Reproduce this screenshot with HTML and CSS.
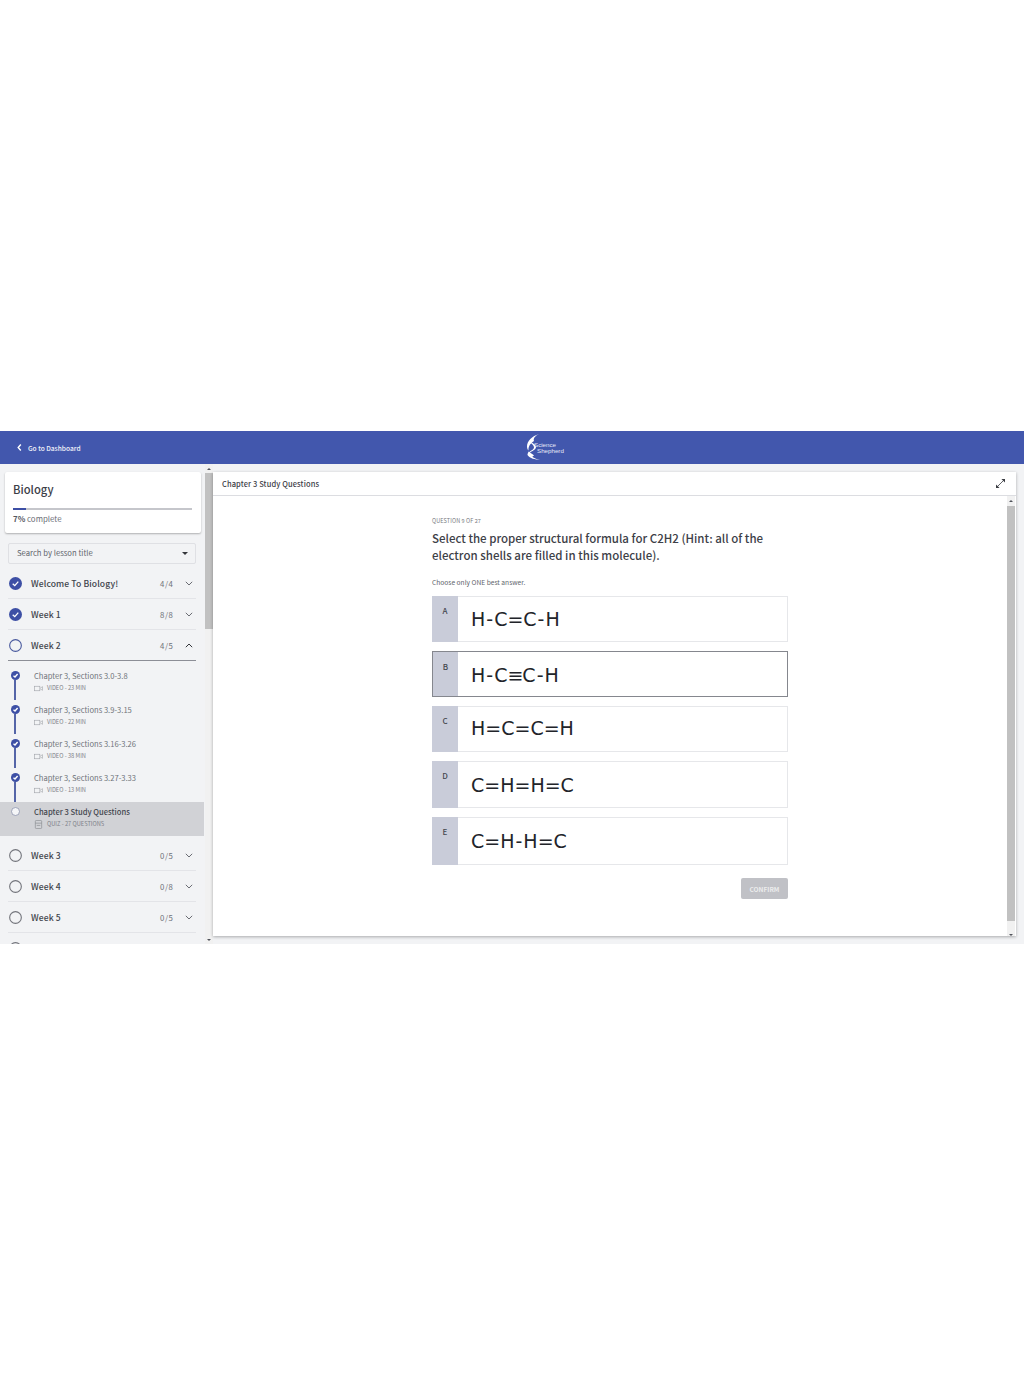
FILE: index.html
```html
<!DOCTYPE html>
<html lang="en">
<head>
<meta charset="utf-8">
<title>Science Shepherd - Biology</title>
<link rel="stylesheet" href="styles.css">
</head>
<body>
<div class="blank-top"></div>
<div class="app">
  <header class="topbar">
    <a class="back">
      <svg class="back-icon" viewBox="0 0 8 10"><path d="M5.5 1.5 2.5 5l3 3.5"/></svg>
      <span>Go to Dashboard</span>
    </a>
    <div class="logo">
      <svg class="logo-mark" viewBox="0 0 17 26">
        <path class="logo-fill" d="M13 0C6 2 1 7 1 12.500c0 1.500.5 3 1.500 4C2 12 5 9 8 7 7 4.500 9 2 13 0z"/>
        <path class="logo-fill" d="M3 7.500c3 1 7 3 7 5.500 0 3-5 4-7 6.500 2 3 6 5.500 11 6.500-5-.5-10-1.500-12.500-5C1 17.500 8 16.500 8 13.500 8 11 5 9 3 7.500z"/>
        <path class="logo-fill" d="M2 17.500c2 1.500 5 2.500 6 4-1 .5-1.500 1-2 1.800C4 22 2.500 20 2 17.500z"/>
      </svg>
      <div class="logo-text"><span>Science</span><span class="logo-second">Shepherd</span></div>
    </div>
  </header>
  <div class="workspace">
    <aside class="sidebar">
      <div class="sidebar-scroll">
        <section class="course-card">
          <h1>Biology</h1>
          <div class="progress"><div class="progress-fill"></div></div>
          <p class="progress-text"><b>7%</b> complete</p>
        </section>
        <div class="search"><span>Search by lesson title</span><i class="caret"></i></div>

        <div class="week">
          <svg class="status" viewBox="0 0 14 14"><circle class="done" cx="7" cy="7" r="7"/><path class="tick" d="M4 7.300 6.200 9.300 10 5"/></svg>
          <span class="week-name">Welcome To Biology!</span><span class="count">4/4</span>
          <svg class="chev" viewBox="0 0 8 5"><path d="M.8.8 4 4 7.200.8"/></svg>
        </div>
        <div class="week">
          <svg class="status" viewBox="0 0 14 14"><circle class="done" cx="7" cy="7" r="7"/><path class="tick" d="M4 7.300 6.200 9.300 10 5"/></svg>
          <span class="week-name">Week 1</span><span class="count">8/8</span>
          <svg class="chev" viewBox="0 0 8 5"><path d="M.8.8 4 4 7.200.8"/></svg>
        </div>
        <div class="week week-open">
          <svg class="status" viewBox="0 0 14 14"><circle class="open-blue" cx="7" cy="7" r="6.300"/></svg>
          <span class="week-name">Week 2</span><span class="count">4/5</span>
          <svg class="chev chev-up" viewBox="0 0 8 5"><path d="M.8 4.200 4 1l3.200 3.200"/></svg>
        </div>

        <ul class="lessons">
          <li class="lesson">
            <div class="rail"><svg class="dot" viewBox="0 0 9 9"><circle class="done" cx="4.500" cy="4.500" r="4.500"/><path class="tick" d="M2.500 4.700 4 6l2.600-3"/></svg><span class="rail-line"></span></div>
            <div><div class="lesson-title">Chapter 3, Sections 3.0-3.8</div>
            <div class="lesson-meta"><svg class="meta-icon" viewBox="0 0 10 7"><rect x=".5" y="1" width="6" height="5"/><path d="M7 3 9.500 1.500v4L7 4"/></svg>VIDEO - 23 MIN</div></div>
          </li>
          <li class="lesson">
            <div class="rail"><svg class="dot" viewBox="0 0 9 9"><circle class="done" cx="4.500" cy="4.500" r="4.500"/><path class="tick" d="M2.500 4.700 4 6l2.600-3"/></svg><span class="rail-line"></span></div>
            <div><div class="lesson-title">Chapter 3, Sections 3.9-3.15</div>
            <div class="lesson-meta"><svg class="meta-icon" viewBox="0 0 10 7"><rect x=".5" y="1" width="6" height="5"/><path d="M7 3 9.500 1.500v4L7 4"/></svg>VIDEO - 22 MIN</div></div>
          </li>
          <li class="lesson">
            <div class="rail"><svg class="dot" viewBox="0 0 9 9"><circle class="done" cx="4.500" cy="4.500" r="4.500"/><path class="tick" d="M2.500 4.700 4 6l2.600-3"/></svg><span class="rail-line"></span></div>
            <div><div class="lesson-title">Chapter 3, Sections 3.16-3.26</div>
            <div class="lesson-meta"><svg class="meta-icon" viewBox="0 0 10 7"><rect x=".5" y="1" width="6" height="5"/><path d="M7 3 9.500 1.500v4L7 4"/></svg>VIDEO - 38 MIN</div></div>
          </li>
          <li class="lesson">
            <div class="rail"><svg class="dot" viewBox="0 0 9 9"><circle class="done" cx="4.500" cy="4.500" r="4.500"/><path class="tick" d="M2.500 4.700 4 6l2.600-3"/></svg><span class="rail-line"></span></div>
            <div><div class="lesson-title">Chapter 3, Sections 3.27-3.33</div>
            <div class="lesson-meta"><svg class="meta-icon" viewBox="0 0 10 7"><rect x=".5" y="1" width="6" height="5"/><path d="M7 3 9.500 1.500v4L7 4"/></svg>VIDEO - 13 MIN</div></div>
          </li>
          <li class="lesson lesson-active">
            <div class="rail"><svg class="dot" viewBox="0 0 9 9"><circle class="dot-open" cx="4.500" cy="4.500" r="4"/></svg></div>
            <div><div class="lesson-title">Chapter 3 Study Questions</div>
            <div class="lesson-meta"><svg class="meta-icon meta-quiz" viewBox="0 0 8 10"><rect x=".5" y=".5" width="7" height="9" rx="1"/><path d="M.5 3.500h7M2 6h4"/></svg>QUIZ - 27 QUESTIONS</div></div>
          </li>
        </ul>

        <div class="week">
          <svg class="status" viewBox="0 0 14 14"><circle class="open-grey" cx="7" cy="7" r="6.300"/></svg>
          <span class="week-name">Week 3</span><span class="count">0/5</span>
          <svg class="chev" viewBox="0 0 8 5"><path d="M.8.8 4 4 7.200.8"/></svg>
        </div>
        <div class="week">
          <svg class="status" viewBox="0 0 14 14"><circle class="open-grey" cx="7" cy="7" r="6.300"/></svg>
          <span class="week-name">Week 4</span><span class="count">0/8</span>
          <svg class="chev" viewBox="0 0 8 5"><path d="M.8.8 4 4 7.200.8"/></svg>
        </div>
        <div class="week">
          <svg class="status" viewBox="0 0 14 14"><circle class="open-grey" cx="7" cy="7" r="6.300"/></svg>
          <span class="week-name">Week 5</span><span class="count">0/5</span>
          <svg class="chev" viewBox="0 0 8 5"><path d="M.8.8 4 4 7.200.8"/></svg>
        </div>
        <div class="week">
          <svg class="status" viewBox="0 0 14 14"><circle class="open-grey" cx="7" cy="7" r="6.300"/></svg>
        </div>
      </div>
      <div class="scrollbar side-scrollbar">
        <i class="arrow-up"></i>
        <div class="thumb side-thumb"></div>
        <i class="arrow-down"></i>
      </div>
    </aside>

    <main class="panel">
      <div class="panel-head">
        <span class="panel-title">Chapter 3 Study Questions</span>
        <svg class="expand" viewBox="0 0 10 10"><path class="expand-line" d="M1.500 8.500 8.500 1.500"/><path class="expand-head" d="M6 0H10V4ZM0 6V10H4Z"/></svg>
      </div>
      <div class="panel-body">
        <div class="quiz">
          <div class="q-number">QUESTION 9 OF 27</div>
          <h2 class="q-text">Select the proper structural formula for C2H2 (Hint: all of the electron shells are filled in this molecule).</h2>
          <p class="q-hint">Choose only ONE best answer.</p>
          <div class="options">
            <div class="option"><span class="letter">A</span><span class="answer">H<span class="hy">-</span>C=C<span class="hy">-</span>H</span></div>
            <div class="option option-b"><span class="letter">B</span><span class="answer">H<span class="hy">-</span>C<span class="triple">≡</span>C<span class="hy">-</span>H</span></div>
            <div class="option option-c"><span class="letter">C</span><span class="answer">H=C=C=H</span></div>
            <div class="option option-d"><span class="letter">D</span><span class="answer">C=H=H=C</span></div>
            <div class="option option-e"><span class="letter">E</span><span class="answer">C=H<span class="hy">-</span>H=C</span></div>
          </div>
          <div class="actions"><button class="confirm" type="button">CONFIRM</button></div>
        </div>
        <div class="scrollbar main-scrollbar">
          <i class="arrow-up"></i>
          <div class="thumb main-thumb"></div>
          <i class="arrow-down"></i>
        </div>
      </div>
    </main>
  </div>
</div>
</body>
</html>
```

FILE: styles.css
```css
* { box-sizing: border-box; }
html, body { margin: 0; padding: 0; background: #fff; }
body {
  width: 1024px;
  height: 1376px;
  overflow: hidden;
  font-family: "Noto Sans CJK SC", "Noto Sans", sans-serif;
  color: #3a3d45;
}
.blank-top { height: 431px; }
.app { height: 513px; display: flex; flex-direction: column; background: #f2f3f5; overflow: hidden; }

.topbar {
  height: 33px;
  flex: none;
  background: #4257ad;
  display: flex;
  align-items: center;
  position: relative;
  color: #fff;
}
.back { display: flex; align-items: center; padding-left: 16px; font-size: 6.6px; font-weight: 500; color: #f3f4fb; }
.back-icon { width: 7px; height: 9px; margin-right: 5px; fill: none; stroke: #fff; stroke-width: 1.6; }
.logo { position: absolute; left: 526px; top: 3px; display: flex; align-items: center; }
.logo-mark { width: 17px; height: 26px; }
.logo-fill { fill: #fff; }
.logo-text { display: flex; flex-direction: column; font-family: "Liberation Sans", sans-serif; font-size: 6.2px; line-height: 6px; color: #e6e9f7; margin-left: -9px; margin-top: 2px; }
.logo-second { padding-left: 3px; }

.workspace { flex: 1; min-height: 0; display: flex; }

.sidebar { width: 213px; flex: none; display: flex; height: 480px; overflow: hidden; }
.sidebar-scroll { width: 205px; flex: none; overflow: hidden; padding-top: 8px; }
.course-card {
  margin-left: 5px;
  width: 196px;
  height: 61px;
  background: #fff;
  border-radius: 2px;
  box-shadow: 0 1px 2px rgba(0,0,0,.28);
  padding: 8px 9px 0 8px;
}
.course-card h1 { margin: 0; font-size: 11.2px; line-height: 19px; font-weight: 500; color: #3b3e47; }
.progress { height: 2px; background: #c5c6cb; margin-top: 9px; }
.progress-fill { width: 7%; height: 100%; background: #3d4fa5; }
.progress-text { margin: 2px 0 0; font-size: 7.9px; line-height: 13px; color: #6b6e76; }
.progress-text b { font-weight: 700; color: #55585f; }

.search {
  margin: 10px 9px 0 8px;
  height: 21px;
  border: 1px solid #dfe0e4;
  border-radius: 2px;
  background: #f2f3f5;
  display: flex;
  align-items: center;
  justify-content: space-between;
  padding: 0 7px 3px 8px;
  font-size: 7.7px;
  color: #61646c;
}
.caret { width: 0; height: 0; margin-top: 3px; border-left: 3px solid transparent; border-right: 3px solid transparent; border-top: 3px solid #33353a; }

.week {
  height: 31px;
  margin: 0 9px 0 8px;
  display: flex;
  align-items: center;
  border-bottom: 1px solid #e3e4e8;
}
.sidebar-scroll .search + .week { margin-top: 4px; }
.week-open { border-bottom-color: #8c8e96; }
.status { width: 13px; height: 13px; flex: none; margin-left: 1px; }
.done { fill: #3d4fa5; }
.tick { fill: none; stroke: #fff; stroke-width: 1.4; }
.open-blue { fill: none; stroke: #4a5a9e; stroke-width: 1.2; }
.open-grey { fill: none; stroke: #73757c; stroke-width: 1.2; }
.week-name { margin-left: 9px; flex: 1; font-size: 8.6px; font-weight: 500; color: #40434b; letter-spacing: .1px; }
.count { font-size: 7.8px; color: #6f7279; width: 15px; letter-spacing: .6px; }
.chev { width: 8px; height: 5px; margin: 0 3px 0 10px; fill: none; stroke: #6a6c73; stroke-width: 1; }
.chev-up { stroke: #33353a; }

.lessons { list-style: none; margin: 5px 1px 4px 0; padding: 0; }
.lesson { height: 34px; display: flex; padding-left: 10.5px; }
.lesson-active { background: #d1d2d6; }
.rail { width: 23.5px; flex: none; display: flex; flex-direction: column; align-items: flex-start; padding-top: 5px; }
.dot { width: 9px; height: 9px; flex: none; }
.dot-open { fill: #f5f6f8; stroke: #8d93ac; stroke-width: .8; }
.rail-line { width: 1.2px; height: 25px; margin-left: 3.9px; background: #5565a8; }
.lesson-title { font-size: 7.6px; line-height: 12px; color: #70737a; margin-top: 4px; }
.lesson-active .lesson-title { font-weight: 500; color: #43464e; }
.lesson-meta { display: flex; align-items: center; font-size: 5.7px; line-height: 12px; color: #7e8188; }
.meta-icon { width: 9px; height: 7px; margin-right: 4px; fill: none; stroke: #a3a5ab; stroke-width: .7; }
.meta-quiz { height: 9px; stroke: #85878d; }

.scrollbar { width: 8px; flex: none; display: flex; flex-direction: column; align-items: center; background: #f1f1f1; }
.side-scrollbar { height: 480px; padding-bottom: 3px; }
.thumb { width: 100%; background: #c1c1c1; }
.side-thumb { height: 156px; margin-top: 3px; }
.arrow-up, .arrow-down { width: 0; height: 0; flex: none; margin-top: 3px; border-left: 2px solid transparent; border-right: 2px solid transparent; }
.arrow-up { border-bottom: 2px solid #50535a; margin-top: 4px; }
.arrow-down { border-top: 2px solid #50535a; margin-top: auto; }

.panel {
  width: 803px;
  height: 464px;
  margin-top: 8px;
  background: #fff;
  box-shadow: 0 1px 3px rgba(0,0,0,.3);
  display: flex;
  flex-direction: column;
}
.panel-head {
  height: 24px;
  flex: none;
  border-bottom: 1px solid #dcdde1;
  display: flex;
  align-items: center;
  justify-content: space-between;
  padding: 0 11px 0 9px;
  font-size: 7.5px;
  font-weight: 500;
  color: #3d4047;
  letter-spacing: .1px;
}
.panel-title { margin-bottom: 1px; }
.expand { width: 9px; height: 9px; margin-bottom: 1px; }
.expand-line { stroke: #3a3c42; stroke-width: .9; fill: none; }
.expand-head { fill: #3a3c42; }

.panel-body { flex: 1; min-height: 0; display: flex; justify-content: space-between; }
.quiz { width: 356px; margin-left: 219px; padding-top: 21px; }
.q-number { font-size: 5.5px; line-height: 8px; color: #767980; letter-spacing: .1px; }
.q-text { margin: 5px 0 0; font-size: 11.5px; line-height: 17px; font-weight: 500; color: #3d4047; }
.q-hint { margin: 13px 0 0; font-size: 6.65px; line-height: 11px; color: #62656c; }
.options { margin-top: 8px; display: flex; flex-direction: column; gap: 9px; }
.option {
  height: 46px;
  display: flex;
  background: #fff;
  border: 1px solid #e6e7ea;
}
.option-b { border-color: #85878e; }
.option-d { height: 47px; }
.option-e { height: 48px; }
.letter {
  width: 26px;
  flex: none;
  margin: -1px 0 -1px -1px;
  background: #c9ccd9;
  text-align: center;
  font-size: 8px;
  line-height: 12px;
  padding-top: 9px;
  font-weight: 500;
  color: #45484f;
}
.option-b .letter { margin: 0; width: 25px; }
.answer {
  margin-left: 13px;
  font-family: "DejaVu Sans", sans-serif;
  font-size: 19px;
  line-height: 45px;
  color: #22242a;
}
.option-b .answer, .option-d .answer, .option-e .answer { line-height: 47px; }
.option-c .answer { line-height: 43px; }
.hy { padding: 0 1px; }
.triple { letter-spacing: -3px; padding-right: 2px; }
.actions { margin-top: 13px; display: flex; justify-content: flex-end; }
.confirm {
  width: 47px;
  height: 21px;
  border: 0;
  padding: 0;
  border-radius: 2px;
  background: #c0c1c6;
  color: #eceded;
  font-family: inherit;
  font-size: 6.5px;
  font-weight: 700;
}
.main-scrollbar { height: 440px; margin-right: 1px; }
.main-thumb { height: 415px; margin-top: 4px; }
```
